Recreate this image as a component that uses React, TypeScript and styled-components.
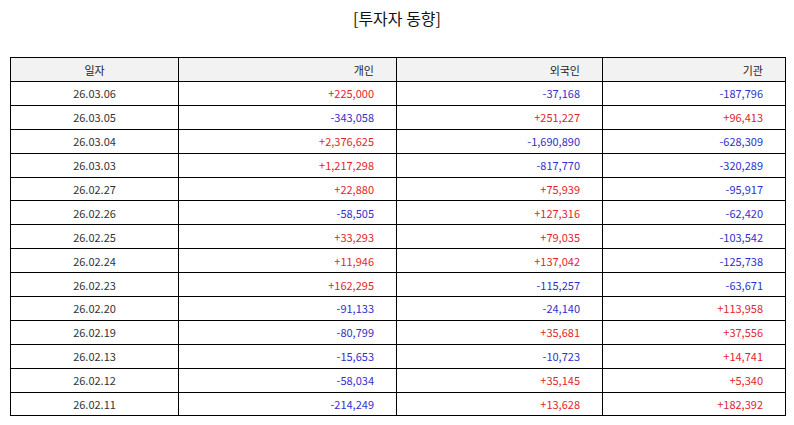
import styled, { createGlobalStyle } from "styled-components";

const GlobalStyle = createGlobalStyle`
  html, body {
    margin: 0;
    padding: 0;
    background: #fff;
  }
  body {
    font-family: "Noto Sans CJK KR", "Noto Sans", sans-serif;
  }
`;

type Row = { date: string; personal: string; foreign: string; inst: string };

const rows: Row[] = [
  { date: "26.03.06", personal: "+225,000", foreign: "-37,168", inst: "-187,796" },
  { date: "26.03.05", personal: "-343,058", foreign: "+251,227", inst: "+96,413" },
  { date: "26.03.04", personal: "+2,376,625", foreign: "-1,690,890", inst: "-628,309" },
  { date: "26.03.03", personal: "+1,217,298", foreign: "-817,770", inst: "-320,289" },
  { date: "26.02.27", personal: "+22,880", foreign: "+75,939", inst: "-95,917" },
  { date: "26.02.26", personal: "-58,505", foreign: "+127,316", inst: "-62,420" },
  { date: "26.02.25", personal: "+33,293", foreign: "+79,035", inst: "-103,542" },
  { date: "26.02.24", personal: "+11,946", foreign: "+137,042", inst: "-125,738" },
  { date: "26.02.23", personal: "+162,295", foreign: "-115,257", inst: "-63,671" },
  { date: "26.02.20", personal: "-91,133", foreign: "-24,140", inst: "+113,958" },
  { date: "26.02.19", personal: "-80,799", foreign: "+35,681", inst: "+37,556" },
  { date: "26.02.13", personal: "-15,653", foreign: "-10,723", inst: "+14,741" },
  { date: "26.02.12", personal: "-58,034", foreign: "+35,145", inst: "+5,340" },
  { date: "26.02.11", personal: "-214,249", foreign: "+13,628", inst: "+182,392" },
];

const Page = styled.div`
  padding: 6px 10px 0 10px;
`;

const Title = styled.h2`
  margin: 0 0 27px 0;
  text-align: center;
  font-size: 16px;
  font-weight: 400;
  line-height: 24px;
  color: #111;
`;

const Table = styled.table`
  width: 775px;
  border-collapse: collapse;
  table-layout: fixed;
  font-size: 11px;
  color: #333;
`;

const HeadCell = styled.th<{ $align?: "center" | "right" }>`
  height: 23px;
  padding: 0 22px 0 0;
  background: #f2f2f2;
  border: 1px solid #000;
  font-weight: 400;
  color: #222;
  text-align: ${(p) => p.$align ?? "right"};
  ${(p) => (p.$align === "center" ? "padding: 0;" : "")}
`;

const DateCell = styled.td`
  height: 22.9px;
  padding: 0;
  border: 1px solid #000;
  text-align: center;
`;

const NumCell = styled.td<{ $up: boolean }>`
  height: 22.9px;
  padding: 0 22px 0 0;
  border: 1px solid #000;
  text-align: right;
  color: ${(p) => (p.$up ? "#e2252b" : "#3030cc")};
`;

const Num = ({ v }: { v: string }) => <NumCell $up={v.startsWith("+")}>{v}</NumCell>;

export default function App() {
  return (
    <>
      <GlobalStyle />
      <Page>
        <Title>[투자자 동향]</Title>
        <Table>
          <colgroup>
            <col style={{ width: 168 }} />
            <col style={{ width: 218 }} />
            <col style={{ width: 206 }} />
            <col style={{ width: 183 }} />
          </colgroup>
          <thead>
            <tr>
              <HeadCell $align="center">일자</HeadCell>
              <HeadCell>개인</HeadCell>
              <HeadCell>외국인</HeadCell>
              <HeadCell>기관</HeadCell>
            </tr>
          </thead>
          <tbody>
            {rows.map((r) => (
              <tr key={r.date}>
                <DateCell>{r.date}</DateCell>
                <Num v={r.personal} />
                <Num v={r.foreign} />
                <Num v={r.inst} />
              </tr>
            ))}
          </tbody>
        </Table>
      </Page>
    </>
  );
}
